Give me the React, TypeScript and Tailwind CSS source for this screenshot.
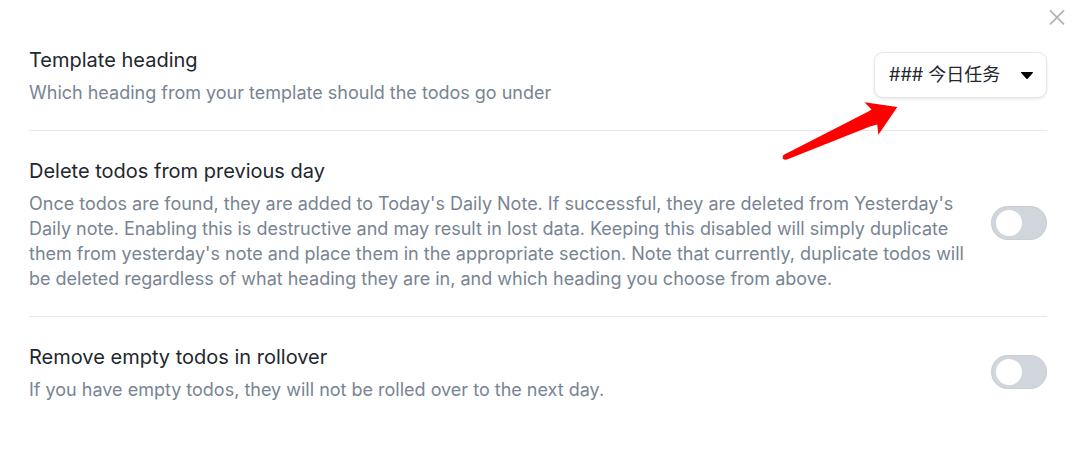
import { useState, type ReactNode } from "react";

type SettingRowProps = {
  id: string;
  title: string;
  description: string;
  last?: boolean;
  children: ReactNode;
};

function SettingRow({ id, title, description, last = false, children }: SettingRowProps) {
  return (
    <div
      className={
        last
          ? "flex items-center justify-between gap-5 pt-6 pb-[25px]"
          : "flex items-center justify-between gap-5 border-b border-[#e6e7e9] pt-6 pb-[25px]"
      }
    >
      <div className="min-w-0 flex-1">
        <label htmlFor={id} className="block text-[20px] leading-8 text-[#22272e]">
          {title}
        </label>
        <p id={`${id}-description`} className="mt-1 text-[18px] leading-[25px] text-[#788493]">
          {description}
        </p>
      </div>
      <div className="shrink-0">{children}</div>
    </div>
  );
}

function Toggle({ id }: { id: string }) {
  const [on, setOn] = useState(false);
  return (
    <input
      id={id}
      type="checkbox"
      role="switch"
      aria-describedby={`${id}-description`}
      checked={on}
      onChange={(event) => setOn(event.target.checked)}
      className="block h-[34px] w-14 cursor-pointer appearance-none rounded-full bg-[#d1d6dc] px-[5px] py-1 shadow-[inset_0_0_2px_rgba(0,0,0,0.12)] before:block before:size-[26px] before:rounded-full before:bg-white before:transition-transform checked:bg-indigo-500 checked:before:translate-x-5"
    />
  );
}

function HeadingSelect({ id }: { id: string }) {
  return (
    <div className="relative">
      <select
        id={id}
        aria-describedby={`${id}-description`}
        className="block h-[46px] w-[173px] cursor-pointer appearance-none rounded-[9px] border border-[#e6e7ec] bg-white pr-10 pl-3.5 text-[18px] text-[#22272e] shadow-[0_1px_3px_rgba(0,0,0,0.1)]"
      >
        <option>### 今日任务</option>
      </select>
      <svg
        viewBox="0 0 12 7"
        aria-hidden="true"
        className="pointer-events-none absolute top-5 right-3.5 h-[7px] w-3 text-black"
      >
        <path d="M.6 0h10.8c.6 0 .8.6.4 1L6.6 6.7c-.3.3-.9.3-1.2 0L.2 1C-.2.6 0 0 .6 0Z" fill="currentColor" />
      </svg>
      <svg
        viewBox="0 0 116 58"
        aria-hidden="true"
        className="pointer-events-none absolute top-[50px] right-[149px] h-[58px] w-[116px] text-[#ff0000]"
      >
        <path
          d="M115.3 5 82.5.2l7 7.4c-2 1.5-4 2.6-7 3.9L2.4 52.6c-2.8 1.4-2.2 5.3 1.2 5.1.8 0 1.4-.3 2-.5L88 24.6c2.7-1.1 4.7-1.7 7.2-2.2l1.2 10.4Z"
          fill="currentColor"
        />
      </svg>
    </div>
  );
}

export default function App() {
  return (
    <main
      className="relative min-h-screen bg-white pt-5 pr-[33px] pl-[29px]"
      style={{ fontFamily: 'Inter, "Noto Sans CJK SC", sans-serif' }}
    >
      <button
        type="button"
        aria-label="Close"
        className="absolute top-[9px] right-[15px] size-4 cursor-pointer text-[#adb4be]"
      >
        <svg viewBox="0 0 16 16" fill="none" stroke="currentColor" strokeWidth="1.8" strokeLinecap="round">
          <path d="m1.5 1.8 13 13M14.5 1.8l-13 13" />
        </svg>
      </button>
      <SettingRow
        id="template-heading"
        title="Template heading"
        description="Which heading from your template should the todos go under"
      >
        <HeadingSelect id="template-heading" />
      </SettingRow>
      <SettingRow
        id="delete-todos"
        title="Delete todos from previous day"
        description="Once todos are found, they are added to Today's Daily Note. If successful, they are deleted from Yesterday's Daily note. Enabling this is destructive and may result in lost data. Keeping this disabled will simply duplicate them from yesterday's note and place them in the appropriate section. Note that currently, duplicate todos will be deleted regardless of what heading they are in, and which heading you choose from above."
      >
        <Toggle id="delete-todos" />
      </SettingRow>
      <SettingRow
        id="remove-empty"
        title="Remove empty todos in rollover"
        description="If you have empty todos, they will not be rolled over to the next day."
        last
      >
        <Toggle id="remove-empty" />
      </SettingRow>
    </main>
  );
}
